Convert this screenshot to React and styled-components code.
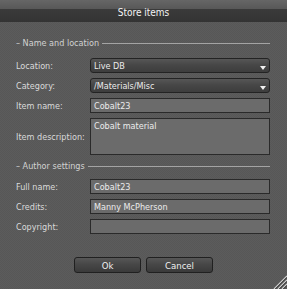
import React from "react";
import styled, { createGlobalStyle } from "styled-components";

const Global = createGlobalStyle`
  html, body { margin: 0; padding: 0; background: #595959; }
  body { width: 287px; height: 289px; overflow: hidden; }
  * { box-sizing: border-box; }
`;

const Dialog = styled.div`
  position: relative;
  width: 287px;
  height: 289px;
  background-color: #5a5a5a;
  background-image: repeating-conic-gradient(#5c5c5c 0 25%, #575757 0 50%);
  background-size: 2px 2px;
  font-family: "DejaVu Sans Condensed", "Liberation Sans", sans-serif;
  font-stretch: condensed;
  font-size: 9px;
  color: #dadada;
`;

const TitleBar = styled.div`
  height: 22px;
  padding-top: 3px;
  display: flex;
  align-items: center;
  justify-content: center;
  background: linear-gradient(
    to bottom,
    #666666 0,
    #585858 9px,
    #3a3a3a 9px,
    #343434 22px
  );
  color: #f4f4f4;
  font-size: 10px;
`;

const Body = styled.div`
  padding: 0 17px 0 16px;
`;

const SectionHeader = styled.div`
  display: flex;
  align-items: center;
  gap: 3px;
  height: 12px;
  margin-top: ${(p) => p.$top}px;
  color: #d2d2d2;
  &::after {
    content: "";
    flex: 1;
    height: 1px;
    background: #a4a4a4;
  }
`;

const Form = styled.div`
  display: grid;
  grid-template-columns: 74px 1fr;
  row-gap: 5px;
  align-items: center;
  margin-top: ${(p) => p.$top}px;
`;

const Label = styled.div`
  color: #dadada;
  white-space: nowrap;
`;

const Input = styled.div`
  height: ${(p) => p.$h || 15}px;
  border: 1px solid #2a2a2a;
  background: #6b6b6b;
  color: #ececec;
  padding: ${(p) => (p.$multi ? "2px 3px" : "0 3px")};
  display: flex;
  align-items: ${(p) => (p.$multi ? "flex-start" : "center")};
  white-space: nowrap;
`;

const Combo = styled.div`
  position: relative;
  height: 15px;
  border: 1px solid #232323;
  border-radius: 3px;
  background: linear-gradient(to bottom, #565656 0%, #474747 45%, #3d3d3d 100%);
  color: #ececec;
  padding: 0 3px;
  display: flex;
  align-items: center;
`;

const Arrow = styled.span`
  position: absolute;
  right: 3px;
  top: 7px;
  width: 0;
  height: 0;
  border-left: 3px solid transparent;
  border-right: 3px solid transparent;
  border-top: 4px solid #f0f0f0;
`;

const Buttons = styled.div`
  display: flex;
  justify-content: center;
  gap: 5px;
  margin-top: 23px;
  padding-left: 1px;
`;

const Button = styled.div`
  width: 67px;
  height: 16px;
  border: 1px solid #202020;
  border-radius: 3px;
  background: linear-gradient(to bottom, #575757 0%, #474747 45%, #3a3a3a 100%);
  color: #f0f0f0;
  display: flex;
  align-items: center;
  justify-content: center;
  font-size: 9.5px;
`;

const Grip = styled.svg`
  position: absolute;
  right: 0;
  bottom: 0;
`;

export default function App() {
  return (
    <>
      <Global />
      <Dialog>
        <TitleBar>Store items</TitleBar>
        <Body>
          <SectionHeader $top={15}>– Name and location</SectionHeader>
          <Form $top={9}>
            <Label>Location:</Label>
            <Combo>
              Live DB
              <Arrow />
            </Combo>
            <Label>Category:</Label>
            <Combo>
              /Materials/Misc
              <Arrow />
            </Combo>
            <Label>Item name:</Label>
            <Input>Cobalt23</Input>
            <Label>Item description:</Label>
            <Input $multi $h={37}>
              Cobalt material
            </Input>
          </Form>
          <SectionHeader $top={5}>– Author settings</SectionHeader>
          <Form $top={7}>
            <Label>Full name:</Label>
            <Input>Cobalt23</Input>
            <Label>Credits:</Label>
            <Input>Manny McPherson</Input>
            <Label>Copyright:</Label>
            <Input />
          </Form>
          <Buttons>
            <Button>Ok</Button>
            <Button>Cancel</Button>
          </Buttons>
        </Body>
        <Grip width="15" height="15" viewBox="0 0 15 15">
          <g stroke="#cfcfcf" strokeWidth="1.2">
            <line x1="15" y1="2" x2="2" y2="15" />
            <line x1="15" y1="6" x2="6" y2="15" />
            <line x1="15" y1="10" x2="10" y2="15" />
          </g>
          <g stroke="#3a3a3a" strokeWidth="1">
            <line x1="15" y1="3.3" x2="3.3" y2="15" />
            <line x1="15" y1="7.3" x2="7.3" y2="15" />
            <line x1="15" y1="11.3" x2="11.3" y2="15" />
          </g>
        </Grip>
      </Dialog>
    </>
  );
}
